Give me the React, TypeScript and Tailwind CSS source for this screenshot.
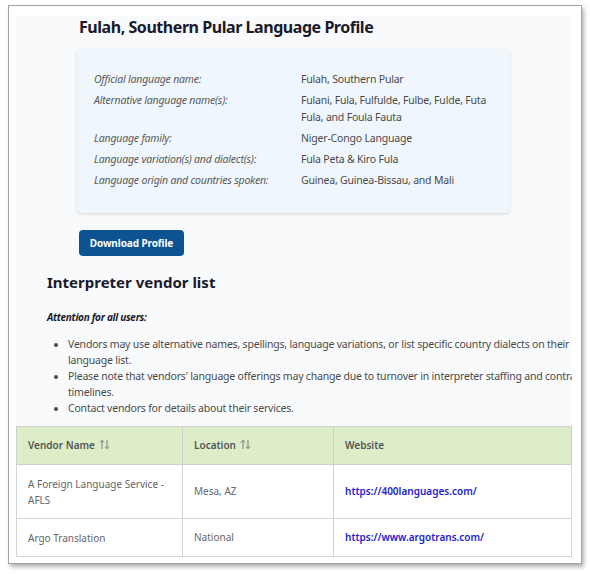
import React from 'react';

const profileRows: { label: string; value: string }[] = [
    { label: 'Official language name:', value: 'Fulah, Southern Pular' },
    { label: 'Alternative language name(s):', value: 'Fulani, Fula, Fulfulde, Fulbe, Fulde, Futa Fula, and Foula Fauta' },
    { label: 'Language family:', value: 'Niger-Congo Language' },
    { label: 'Language variation(s) and dialect(s):', value: 'Fula Peta & Kiro Fula' },
    { label: 'Language origin and countries spoken:', value: 'Guinea, Guinea-Bissau, and Mali' },
];

const notes = [
    'Vendors may use alternative names, spellings, language variations, or list specific country dialects on their language list.',
    "Please note that vendors' language offerings may change due to turnover in interpreter staffing and contract timelines.",
    'Contact vendors for details about their services.',
];

const vendors = [
    { name: 'A Foreign Language Service - AFLS', location: 'Mesa, AZ', url: 'https://400languages.com/' },
    { name: 'Argo Translation', location: 'National', url: 'https://www.argotrans.com/' },
];

const SortIcon: React.FC = () => (
    <svg width="11" height="11" viewBox="0 0 11 11" className="ml-[4px] inline-block align-[-1px]" fill="none" stroke="#7a7a7a" strokeWidth="1">
        <path d="M3 10V1.5M1 3.5L3 1.3L5 3.5" />
        <path d="M8 1v8.5M6 7.5L8 9.7L10 7.5" />
    </svg>
);

const App: React.FC = () => {
    return (
        <div className="w-[590px] h-[574px] bg-white pl-[8px] pt-[5px] font-['Noto_Sans',sans-serif]">
            <div className="w-[574px] h-[559px] border border-[#a3a3a3] bg-white pl-[7px] pr-[9px] pt-[10px] shadow-[2px_3px_4px_rgba(0,0,0,0.3)]">
                <div className="w-[556px] bg-[#f9fafc] overflow-hidden">
                    <h1 className="ml-[63px] text-[16px] leading-[22px] tracking-[-0.45px] font-bold text-[#1a1a2b] whitespace-nowrap">
                        Fulah, Southern Pular Language Profile
                    </h1>

                    <div className="ml-[61px] mt-[11px] w-[433px] h-[164px] rounded-sm bg-[#f0f7fc] pl-[17px] pt-[22px] shadow-[0_1px_3px_rgba(0,0,0,0.15)]">
                        <div className="flex flex-col gap-[4px] text-[10.5px] leading-[17px] tracking-[-0.2px]">
                            {profileRows.map((row) => (
                                <div key={row.label} className="flex">
                                    <div className="w-[207px] shrink-0 italic text-[#5a5a5a]">{row.label}</div>
                                    <div className="w-[188px] text-[#4a4a4a]">{row.value}</div>
                                </div>
                            ))}
                        </div>
                    </div>

                    <button className="ml-[63px] mt-[17px] w-[105px] h-[26px] rounded-sm bg-[#0d5391] text-[10px] tracking-[-0.1px] font-bold text-white">
                        Download Profile
                    </button>

                    <h2 className="ml-[31px] mt-[16px] text-[15px] leading-[20px] font-bold text-[#1a1a2b]">
                        Interpreter vendor list
                    </h2>

                    <p className="ml-[31px] mt-[17px] text-[10px] leading-[16px] tracking-[-0.3px] font-bold italic text-[#1a1a2b]">
                        Attention for all users:
                    </p>

                    <ul className="ml-[41px] mt-[11px] w-[536px] list-disc pl-[11px] text-[10.5px] leading-[16px] tracking-[-0.2px] text-[#4a4a4a]">
                        {notes.map((note) => (
                            <li key={note}>{note}</li>
                        ))}
                    </ul>

                    <table className="mt-[10px] w-[556px] table-fixed border-collapse text-[10px]">
                        <colgroup>
                            <col className="w-[166px]" />
                            <col className="w-[151px]" />
                            <col />
                        </colgroup>
                        <thead>
                            <tr className="h-[38px] bg-[#dcedc8] text-left text-[#555]">
                                <th className="border border-[#cfcfcf] pl-[11px] font-semibold">
                                    Vendor Name
                                    <SortIcon />
                                </th>
                                <th className="border border-[#cfcfcf] pl-[11px] font-semibold">
                                    Location
                                    <SortIcon />
                                </th>
                                <th className="border border-[#cfcfcf] pl-[11px] font-semibold">Website</th>
                            </tr>
                        </thead>
                        <tbody className="bg-white text-[#666]">
                            {vendors.map((v, i) => (
                                <tr key={v.name} className={i === 0 ? 'h-[54px]' : 'h-[38px]'}>
                                    <td className="border border-[#d4d4d4] pl-[11px] pr-[14px] leading-[16px]">{v.name}</td>
                                    <td className="border border-[#d4d4d4] pl-[11px]">{v.location}</td>
                                    <td className="border border-[#d4d4d4] pl-[11px]">
                                        <a href={v.url} className="font-semibold text-[#2323c8]">
                                            {v.url}
                                        </a>
                                    </td>
                                </tr>
                            ))}
                        </tbody>
                    </table>
                </div>
            </div>
        </div>
    );
};

export default App;
